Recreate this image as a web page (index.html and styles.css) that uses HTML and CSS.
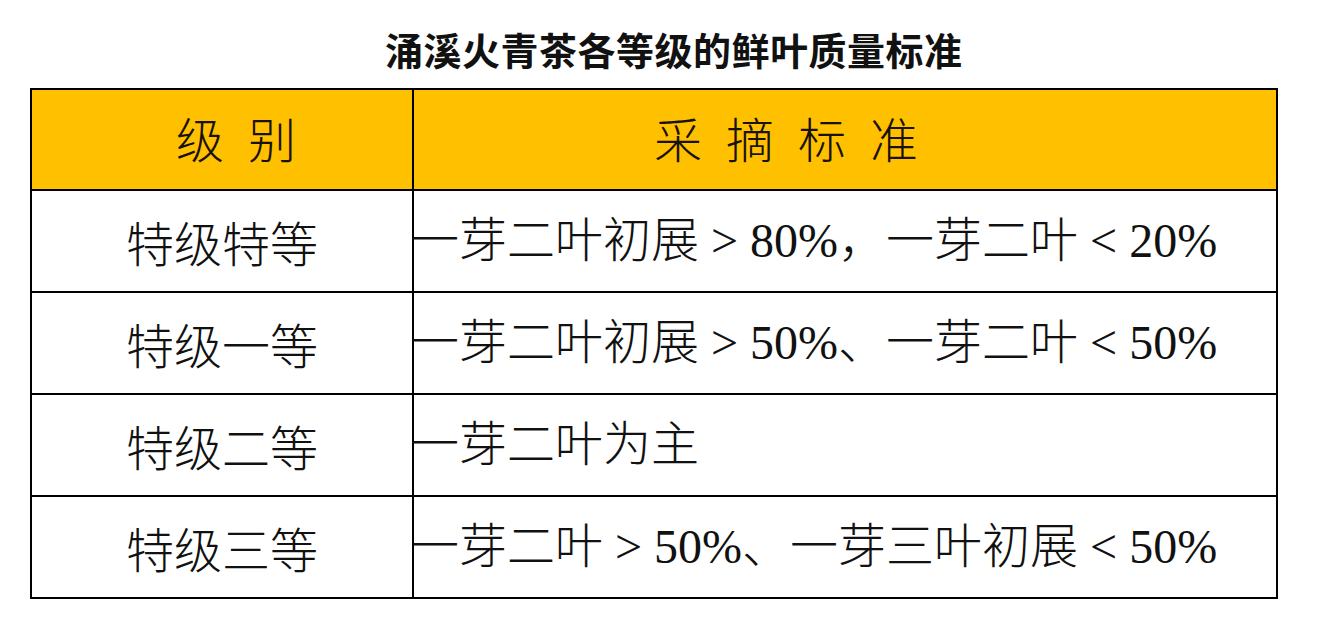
FILE: index.html
```html
<!DOCTYPE html>
<html lang="zh-CN">
<head>
<meta charset="utf-8">
<title>涌溪火青茶各等级的鲜叶质量标准</title>
<link rel="stylesheet" href="styles.css">
</head>
<body>
<div class="page">
  <h1 class="title">涌溪火青茶各等级的鲜叶质量标准</h1>
  <table class="grade-table">
    <thead>
      <tr>
        <th class="col-grade"><span class="head-text head-grade">级别</span></th>
        <th class="col-std"><span class="head-text head-std">采摘标准</span></th>
      </tr>
    </thead>
    <tbody>
      <tr>
        <td class="col-grade">特级特等</td>
        <td class="col-std">一芽二叶初展 &gt; 80%，一芽二叶 &lt; 20%</td>
      </tr>
      <tr>
        <td class="col-grade">特级一等</td>
        <td class="col-std">一芽二叶初展 &gt; 50%、一芽二叶 &lt; 50%</td>
      </tr>
      <tr>
        <td class="col-grade">特级二等</td>
        <td class="col-std">一芽二叶为主</td>
      </tr>
      <tr>
        <td class="col-grade">特级三等</td>
        <td class="col-std">一芽二叶 &gt; 50%、一芽三叶初展 &lt; 50%</td>
      </tr>
    </tbody>
  </table>
</div>
</body>
</html>
```
FILE: styles.css
```css
html, body {
  margin: 0;
  padding: 0;
  background: #ffffff;
}

.page {
  width: 1332px;
  height: 632px;
  padding: 0 0 0 30px;
  box-sizing: border-box;
}

.title {
  margin: 0;
  height: 88px;
  box-sizing: border-box;
  padding: 26px 0 0 355px;
  font-family: "Noto Sans CJK SC", sans-serif;
  font-weight: 700;
  font-size: 38px;
  line-height: 46px;
  color: #111;
  letter-spacing: 0.5px;
}

.grade-table {
  border-collapse: collapse;
  width: 1248px;
  table-layout: fixed;
  font-family: "Liberation Serif", "Noto Sans CJK SC", serif;
  font-weight: 300;
  font-size: 48px;
  color: #111;
}

.grade-table th,
.grade-table td {
  border: 2px solid #000;
  height: 100px;
  padding: 0;
  vertical-align: middle;
  line-height: 1;
}

.grade-table th {
  background: #ffc000;
  font-weight: 300;
  text-align: left;
  height: 99px;
  color: #1a1208;
}

.grade-table th.col-grade {
  width: 380px;
}

.head-text {
  display: inline-block;
  font-family: "Noto Sans CJK SC", sans-serif;
  letter-spacing: 24px;
}

.head-grade {
  margin-left: 144px;
}

.head-std {
  margin-left: 240px;
}

.grade-table td.col-grade {
  text-align: center;
  font-family: "Noto Sans CJK SC", sans-serif;
}

.grade-table td.col-std {
  text-align: left;
  text-indent: -3px;
  white-space: nowrap;
}
```
